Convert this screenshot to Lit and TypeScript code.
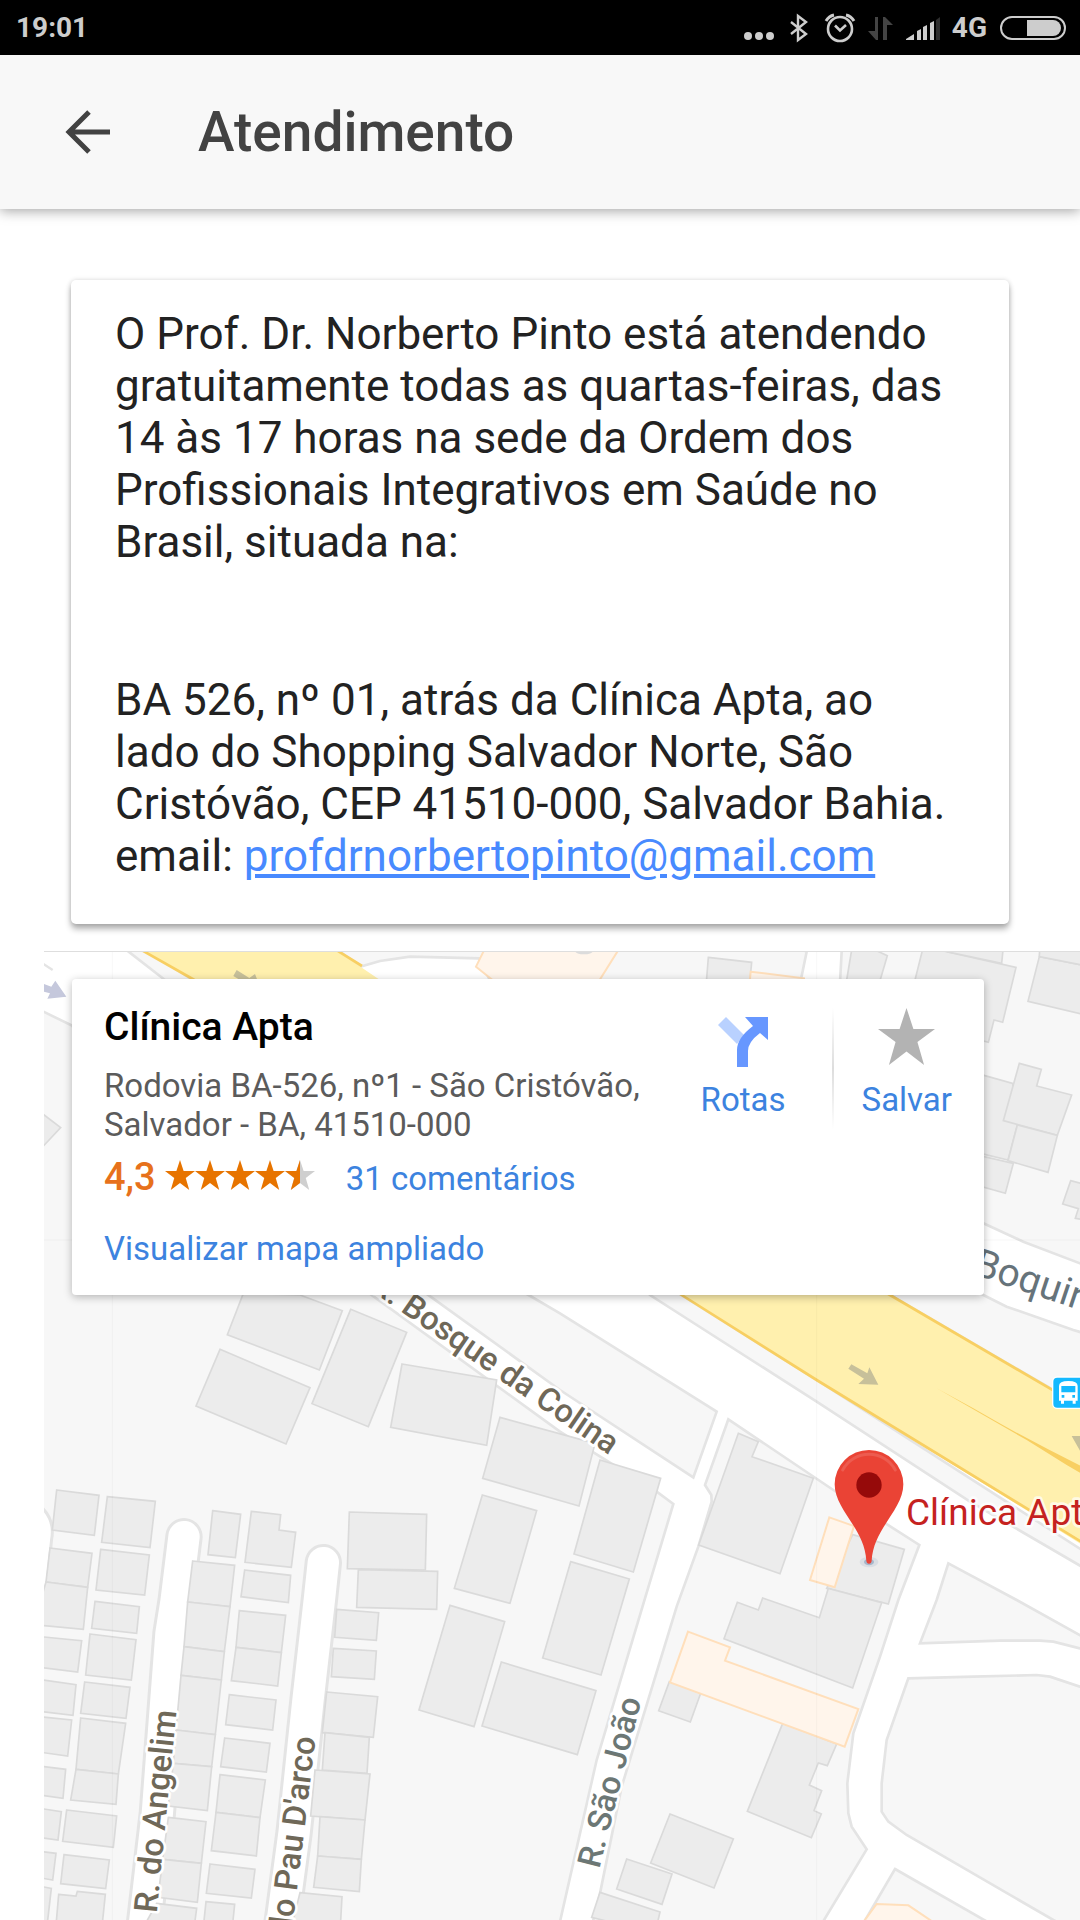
import { LitElement, html, svg, css } from "lit";
import { customElement } from "lit/decorators.js";

/* Map geometry, in map units (three per pixel of the default view). */

const LAND = [
  // west of Rua Bosque da Colina and Rua São João
  "-40,-830 96,-763 500,-300 985,38 1560,455 1850,635 1900,672 1812,965 1670,1440 1552,1960 -40,1960",
  // wedge between Bosque da Colina and the service road
  "1100,0 1155,38 1560,330 1960,592 2030,395 1560,100 1440,30 1390,0",
  // strip beside the highway
  "1700,-90 1830,45 2330,365 2790,665 3160,880 3160,832 2330,300 1925,45 1700,-90",
  // north-east of the highway
  "2500,0 2550,45 3040,330 3200,425 3200,180 3100,150 2900,80 2830,45 2740,0",
  "2360,-1100 2405,-985 2395,-800 2700,-230 2835,-168 2950,-115 3120,-50 3200,-20 3200,-1100",
  "2060,-1100 2300,-985 2285,-912 2250,-800 1400,-800 1317,-965 1110,-970 1020,-957 960,-940 880,-1000 880,-1100",
  "240,-1005 375,-900 460,-900 290,-1005",
  // around the clinic
  "2065,418 2380,630 2638,795 2575,960 2520,1130 2440,1360 2422,1510 2425,1600 2435,1640 2480,1708 2340,1940 1655,1940 1680,1840 1745,1520 1910,980 1975,800 2015,665 2014,645 1995,615",
  "2725,850 2930,960 3200,1110 3200,1130 3120,1105 3040,1085 3000,1082 2880,1082 2640,1090 2690,960",
  "2605,1195 2800,1190 2990,1185 3030,1190 3120,1220 3200,1245 3200,2000 3040,1920 2600,1665 2545,1625 2525,1595 2525,1510 2540,1380",
  "2565,1767 2850,1930 2470,1930",
];

const DEAD_ENDS = [
  "M-30,720 Q-10,740 -16,770 L-40,1000",
  "M432,770 L408,965 L393,1060 L352,1600 L310,1960",
  "M850,848 L838,960 L804,1260 L762,1660 L722,1960",
];

const BUILDINGS = [
  // top right
  "2005,-968 2135,-953 2128,-880 1998,-880",
  "2440,-1020 2542,-973 2500,-830 2420,-900",
  "2650,-1000 2720,-985 2928,-938 2888,-773 2862,-780 2845,-713 2780,-730 2600,-800",
  "2720,-985 2892,-1020 2885,-950",
  "2998,-970 3200,-930 3200,-780 2964,-836",
  "3000,-1020 3200,-1020 3200,-930 2998,-970",
  "2700,-640 2832,-614 2918,-590 2932,-465 2904,-360 2800,-385",
  "2938,-650 3004,-632 2990,-582 3095,-555 3052,-434 2890,-478",
  "2932,-465 3052,-434 3024,-323 2904,-358",
  "2790,-380 2920,-350 2896,-260 2790,-290",
  "3092,-298 3200,-270 3200,-170 3106,-185 3115,-214 3068,-228",
  // left, peeking from under the card
  "-20,-520 62,-457 -20,-370",
  // along Bosque da Colina
  "610,40 780,45 907,92 838,270 562,164",
  "540,208 810,323 738,492 468,378",
  "932,88 1100,157 985,440 816,371",
  "1086,252 1370,300 1340,496 1052,442",
  "1380,412 1665,490 1617,678 1328,595",
  "1327,645 1490,692 1410,970 1243,925",
  "1680,540 1862,595 1780,876 1602,822",
  "1592,845 1768,897 1683,1185 1508,1134",
  "1230,976 1394,1025 1302,1340 1137,1290",
  "1384,1146 1668,1232 1612,1424 1326,1338",
  // first columns
  "50,630 177,646 163,766 37,750",
  "202,650 346,664 330,803 185,787",
  "30,804 156,820 143,922 18,906",
  "182,808 328,825 314,945 168,930",
  "18,906 143,922 130,1048 -20,1034",
  "165,964 298,980 290,1060 155,1045",
  "-20,1068 125,1082 113,1176 -20,1160",
  "150,1062 288,1079 274,1200 137,1185",
  "-20,1196 108,1214 99,1306 -20,1292",
  "134,1206 270,1222 258,1315 122,1300",
  "-20,1308 95,1320 83,1428 -20,1414",
  "122,1314 257,1330 235,1482 108,1468",
  "108,1468 235,1482 228,1573 92,1560",
  "-20,1456 77,1468 69,1555 -20,1542",
  "-20,1582 64,1595 54,1680 -20,1670",
  "80,1590 230,1608 220,1702 68,1684",
  "-20,1712 48,1720 38,1800 -20,1790",
  "72,1724 208,1740 197,1826 62,1811",
  "-20,1815 34,1825 22,1930 -20,1930",
  "56,1843 108,1848 112,1834 196,1843 184,1960 46,1960",
  // between Angelim and Pau D'arco
  "518,692 602,703 586,833 504,824",
  "634,694 722,704 717,750 767,757 754,862 615,847",
  "458,843 584,856 570,980 443,966",
  "614,870 752,886 745,968 603,950",
  "443,966 570,980 553,1115 432,1100",
  "432,1100 553,1115 544,1200 423,1186",
  "423,1186 544,1200 526,1364 408,1350",
  "408,1350 526,1364 515,1460 400,1450",
  "400,1450 515,1460 502,1592 385,1578",
  "385,1612 498,1625 484,1750 368,1738",
  "368,1738 484,1750 472,1867 354,1852",
  "350,1870 470,1885 460,1960 300,1960",
  "598,992 737,1006 724,1118 588,1102",
  "588,1102 724,1118 713,1218 574,1202",
  "568,1244 708,1260 698,1350 557,1334",
  "554,1374 690,1390 679,1476 542,1460",
  "540,1484 676,1500 660,1613 528,1597",
  "528,1597 660,1613 649,1728 514,1712",
  "510,1752 645,1768 634,1854 499,1840",
  "498,1865 584,1873 575,1960 488,1960",
  // east of Pau D'arco
  "928,696 1160,703 1156,870 922,866",
  "955,869 1193,874 1190,988 950,982",
  "890,988 1016,998 1009,1081 884,1072",
  "880,1105 1009,1113 1003,1198 874,1190",
  "860,1236 1013,1250 1000,1372 847,1358",
  "855,1358 988,1372 981,1480 847,1470",
  "825,1470 990,1482 975,1620 812,1608",
  "840,1610 975,1620 964,1738 833,1728",
  "833,1728 964,1738 958,1835 821,1822",
  "780,1838 906,1850 900,1960 750,1960",
  // around the clinic
  "2095,460 2155,485 2136,530 2320,595 2220,881 1976,795",
  "2438,764 2593,808 2545,972 2360,925",
  "2365,925 2525,968 2438,1224 2052,1076 2092,967 2155,990 2168,954 2338,1013",
  "1888,1205 1982,1240 1951,1326 1856,1292",
  "2228,1330 2390,1392 2362,1457 2335,1449 2308,1515 2345,1532 2322,1592 2344,1602 2314,1673 2122,1594",
  "1890,1602 2080,1677 2022,1824 1832,1749",
  "1760,1737 1896,1782 1866,1873 1730,1827",
  "1680,1837 1860,1896 1845,1960 1655,1912",
];

const SHOPS = [
  "1370,-1060 1340,-1005 1308,-940 1420,-850 1660,-870 1732,-985 1780,-1060",
  "2132,-925 2292,-905 2290,-860 2126,-860",
  "2368,712 2442,738 2384,922 2310,900",
  "1944,1055 2070,1102 2055,1142 2455,1287 2414,1400 1890,1207",
  "2510,1872 2605,1876 2700,1940 2460,1940",
];

const HIGHWAY = "278,-1005 865,-1005 1020,-900 2550,45 3200,425 3200,840 2330,300 1925,45 700,-745 458,-903";
const HIGHWAY_EDGES = "M278,-1005 L458,-903 L1000,-560 L1925,45 L2330,300 L3200,832 M865,-1005 L966,-942 M2400,-45 L2550,45 L3200,425";

const STAR = "M12 0 L14.9 8.8 H24 L16.6 14.3 L19.4 24 L12 18.3 L4.6 24 L7.4 14.3 L0 8.8 H9.1 Z";

const poly = (cls: string) => (points: string) => svg`<polygon class=${cls} points=${points}></polygon>`;

@customElement("status-bar")
class StatusBar extends LitElement {
  static styles = css`
    :host {
      display: flex;
      align-items: center;
      justify-content: space-between;
      height: 55px;
      padding: 0 13px 0 16px;
      background: #000;
      color: #cdcdcd;
      font: 700 28px/34px Roboto, sans-serif;
    }
    .icons { display: flex; align-items: center; gap: 12px; }
    svg { display: block; }
  `;
  render() {
    return html`
      <time>19:01</time>
      <div class="icons">
        <svg width="202" height="32" viewBox="0 0 202 32" fill="#cdcdcd" aria-hidden="true">
          <circle cx="10" cy="24" r="4"></circle><circle cx="21" cy="24" r="4"></circle><circle cx="32" cy="24" r="4"></circle>
          <path d="M53 10 L68 22 L60 28 V4 L68 10 L53 22" fill="none" stroke="#cdcdcd" stroke-width="2.4"></path>
          <g fill="none" stroke="#cdcdcd" stroke-width="2.6">
            <circle cx="102" cy="17" r="12"></circle>
            <path d="M97 13.500 L102 18.500 L108 13"></path>
            <path d="M88 9 Q91 4 96 3 M116 9 Q113 4 108 3" stroke-width="3"></path>
          </g>
          <path d="M137 5 H140 V28 H138 L130 19 H137 Z M145 28 V5 H147 L155 13 H149 V28 Z" fill="#444"></path>
          <path d="M168 28 V27 L176 22 V28 Z M179 19 L183 17 V28 H179 Z M185 15 L189 13 V28 H185 Z M192 11 L196 9 V28 H192 Z"></path>
          <path d="M198 8 L202 5 V28 H198 Z" fill="#2e2e2e"></path>
        </svg>
        <span>4G</span>
        <svg width="68" height="26" viewBox="0 0 68 26" aria-hidden="true">
          <rect x="2" y="2" width="64" height="22" rx="11" fill="none" stroke="#cdcdcd" stroke-width="2"></rect>
          <path d="M28 5 H54 A8 8 0 0 1 54 21 H28 Z" fill="#cdcdcd"></path>
        </svg>
      </div>
    `;
  }
}

@customElement("street-map")
class StreetMap extends LitElement {
  static styles = css`
    :host { display: block; }
    svg { display: block; width: 100%; height: 100%; }
    .land { fill: #f7f7f7; stroke: #e4e4e4; stroke-width: 8; }
    .building { fill: #ececec; stroke: #dadada; stroke-width: 5; }
    .shop { fill: #fff5eb; stroke: #ffdfbb; stroke-width: 6; }
    .casing { fill: none; stroke: #e4e4e4; stroke-width: 112; stroke-linecap: round; }
    .street { fill: none; stroke: #fff; stroke-width: 94; stroke-linecap: round; }
    .highway { fill: #fff0ae; }
    .edge { fill: none; stroke: #f8cf62; stroke-width: 8; }
    .seam { fill: none; stroke: #000; stroke-opacity: 0.03; stroke-width: 3; }
    text { font: 500 98px Roboto, sans-serif; fill: #6f6858; stroke: #fff; stroke-width: 16; stroke-linejoin: round; paint-order: stroke; }
    .secondary { fill: #6c7775; }
    .avenue { fill: #66737a; font-size: 117px; font-weight: 400; }
    .place { fill: #c5221f; font-size: 111px; font-weight: 400; stroke-opacity: 0.7; }
  `;
  render() {
    return html`
      <svg viewBox="12 -984 3108 2904" preserveAspectRatio="xMinYMin slice" role="img" aria-label="Clínica Apta">
        <rect x="0" y="-1000" width="6000" height="6000" fill="#fff"></rect>
        ${LAND.map(poly("land"))}
        ${DEAD_ENDS.map((d) => svg`<path class="casing" d=${d}></path>`)}
        ${DEAD_ENDS.map((d) => svg`<path class="street" d=${d}></path>`)}
        ${BUILDINGS.map(poly("building"))}
        ${SHOPS.map(poly("shop"))}
        <polygon class="highway" points=${HIGHWAY}></polygon>
        <path class="edge" d=${HIGHWAY_EDGES}></path>
        <path fill="#f8cf62" d="M2690,325 L2800,385 Q2980,490 3200,595 V625 L3080,555 L2960,480 Z"></path>
        <path fill="#c7c09a" d="M2434,253 L2482,280 L2488,262 L2515,314 L2455,312 L2472,296 L2425,266 Z M3095,468 H3160 V560 L3120,512 Z M590,-930 L628,-906 L645,-918 L660,-880 L600,-900 L580,-912 Z"></path>
        <path fill="#c5c8dc" d="M0,-892 L34,-880 L46,-898 L79,-850 L22,-844 L30,-860 L0,-868 Z"></path>
        <path fill="none" stroke="#e4e4e4" stroke-width="7" d="M0,-955 L38,-930"></path>
        <ellipse cx="1632" cy="-986" rx="26" ry="9" fill="#dcdcdc"></ellipse>
        <path class="seam" d="M217,-984 V1920 M2330,-984 V1920 M12,-120 H6000"></path>

        <text text-anchor="end" transform="translate(1708 526) rotate(34.6)">R. Bosque da Colina</text>
        <text transform="translate(350 1900) rotate(-84.4)">R. do Angelim</text>
        <text text-anchor="end" transform="translate(827 1373) rotate(-83)">R. do Pau D'arco</text>
        <text class="secondary" transform="translate(1678 1768) rotate(-76)">R. São João</text>
        <text class="avenue" transform="translate(2795 -18) rotate(18.500)">Boquira</text>

        <rect x="3036" y="289" width="98" height="98" rx="16" fill="#fff"></rect>
        <rect x="3040" y="293" width="90" height="90" rx="12" fill="#14b9ff"></rect>
        <path fill="#fff" d="M3057,318 Q3057,303 3085,303 Q3113,303 3113,318 V362 H3107 V371 H3098 V362 H3072 V371 H3063 V362 H3057 Z"></path>
        <path fill="#14b9ff" d="M3064,318 H3106 V337 H3064 Z M3065,345 h8 v8 h-8 Z M3097,345 h8 v8 h-8 Z"></path>

        <ellipse cx="2487" cy="846" rx="28" ry="16" fill="#7c93b8" opacity="0.15"></ellipse>
        <ellipse cx="2487" cy="846" rx="15" ry="10" fill="#587aa8" opacity="0.4"></ellipse>
        <path fill="#ea4335" d="M2487,510 A103,103 0 0 1 2590,613 C2590,690 2500,745 2495,842 Q2494,851 2487,851 Q2480,851 2479,842 C2474,745 2384,690 2384,613 A103,103 0 0 1 2487,510 Z"></path>
        <path fill="none" stroke="#ed5b4f" stroke-width="9" stroke-linecap="round" d="M2408,570 A90,90 0 0 1 2566,570"></path>
        <circle cx="2487" cy="615" r="38" fill="#960a0a"></circle>
        <text class="place" x="2598" y="734">Clínica Apta</text>
      </svg>
    `;
  }
}

@customElement("app-root")
class AppRoot extends LitElement {
  static styles = css`
    :host {
      display: flex;
      flex-direction: column;
      min-height: 100vh;
      background: #fff;
      font-family: Roboto, sans-serif;
      overflow: hidden;
    }
    a { color: #3c83df; text-decoration: none; }
    p, h1, h2 { margin: 0; }
    button { padding: 0; border: 0; background: none; font: inherit; color: inherit; cursor: pointer; }
    svg { display: block; }
    .toolbar {
      display: flex;
      align-items: center;
      gap: 84px;
      height: 154px;
      padding: 0 62px;
      background: #f8f8f8;
      color: #424242;
      box-shadow: 0 2px 12px rgba(0, 0, 0, 0.36);
    }
    .toolbar h1 { font-size: 55px; line-height: 64px; font-weight: 500; }
    .info {
      margin: 71px 71px 27px;
      padding: 28px 44px 42px;
      border-radius: 5px;
      background: #fff;
      box-shadow: 0 5px 6px rgba(0, 0, 0, 0.3), 0 0 5px rgba(0, 0, 0, 0.14);
      color: #222;
      font-size: 44px;
      line-height: 52px;
    }
    .info p + p { margin-top: 106px; }
    .info a { color: #488aff; text-decoration: underline; }
    .map {
      position: relative;
      flex: 1;
      margin-left: 44px;
      padding: 27px 96px 27px 28px;
      border-top: 1px solid #dedede;
    }
    .canvas { position: absolute; inset: 0; }
    .place {
      position: relative;
      display: flex;
      justify-content: space-between;
      align-items: flex-start;
      padding: 26px 32px 27px;
      border-radius: 4px;
      background: #fff;
      box-shadow: 0 2px 8px rgba(0, 0, 0, 0.28);
      font-size: 33px;
      line-height: 39px;
    }
    .details { display: flex; flex-direction: column; align-items: flex-start; }
    .details h2 { font-size: 39px; line-height: 44px; font-weight: 500; color: #000; }
    .address { margin-top: 17px; color: #5b5b5b; }
    .rating { display: flex; align-items: baseline; gap: 9px; margin-top: 11px; }
    .rating strong { font-size: 38px; line-height: 44px; font-weight: 500; color: #e7711b; }
    .rating a { margin-left: 20px; }
    .larger { margin-top: 30px; }
    .actions { display: flex; margin-top: 3px; color: #3c83df; }
    .actions > * { display: flex; flex-direction: column; align-items: center; gap: 13px; }
    .divider { width: 2px; height: 121px; margin: 0 28px 0 46px; background: linear-gradient(transparent, #ddd 50%, transparent); }
  `;

  render() {
    return html`
      <status-bar></status-bar>
      <header class="toolbar">
        <button aria-label="Voltar">
          <svg width="52" height="52" viewBox="0 0 52 52" fill="none" stroke="currentColor" stroke-width="5">
            <path d="M48 26 H9 M27 6 L7 26 L27 46"></path>
          </svg>
        </button>
        <h1>Atendimento</h1>
      </header>
      <main class="info">
        <p>O Prof. Dr. Norberto Pinto está atendendo gratuitamente todas as quartas-feiras, das 14 às 17 horas na sede da Ordem dos Profissionais Integrativos em Saúde no Brasil, situada na:</p>
        <p>BA 526, nº 01, atrás da Clínica Apta, ao lado do Shopping Salvador Norte, São Cristóvão, CEP 41510-000, Salvador Bahia. email: <a href="mailto:profdrnorbertopinto@gmail.com">profdrnorbertopinto@gmail.com</a></p>
      </main>
      <section class="map">
        <street-map class="canvas"></street-map>
        <article class="place">
          <div class="details">
            <h2>Clínica Apta</h2>
            <p class="address">Rodovia BA-526, nº1 - São Cristóvão,<br />Salvador - BA, 41510-000</p>
            <div class="rating">
              <strong>4,3</strong>
              <svg width="152" height="30" viewBox="0 0 152 30" aria-hidden="true">
                ${[0, 1, 2, 3, 4].map((i) => svg`<path transform="translate(${i * 30} 0) scale(1.250)" d=${STAR} fill=${i < 4 ? "#e77400" : "#cfcfcf"}></path>`)}
                <path transform="translate(120 0) scale(1.250)" d="M12 0 V18.300 L4.600 24 L7.400 14.300 L0 8.800 H9.100 Z" fill="#e77400"></path>
              </svg>
              <a href="#comentarios">31 comentários</a>
            </div>
            <a class="larger" href="#mapa">Visualizar mapa ampliado</a>
          </div>
          <div class="actions">
            <a href="#rotas">
              <svg width="52" height="59" viewBox="0 0 52 59">
                <path fill="#b9d1ff" d="M1 17 L9 9 L27 27 L20 36 Z"></path>
                <path fill="#6797ff" d="M28 9 H51 V32 L43 25 Q31 34 31 43 V59 H20 V42 Q20 30 36 18 Z"></path>
              </svg>
              Rotas
            </a>
            <div class="divider"></div>
            <button>
              <svg width="57" height="59" viewBox="0 0 24 24" preserveAspectRatio="xMidYMin" fill="#b3b3b3"><path d=${STAR}></path></svg>
              Salvar
            </button>
          </div>
        </article>
      </section>
    `;
  }
}
